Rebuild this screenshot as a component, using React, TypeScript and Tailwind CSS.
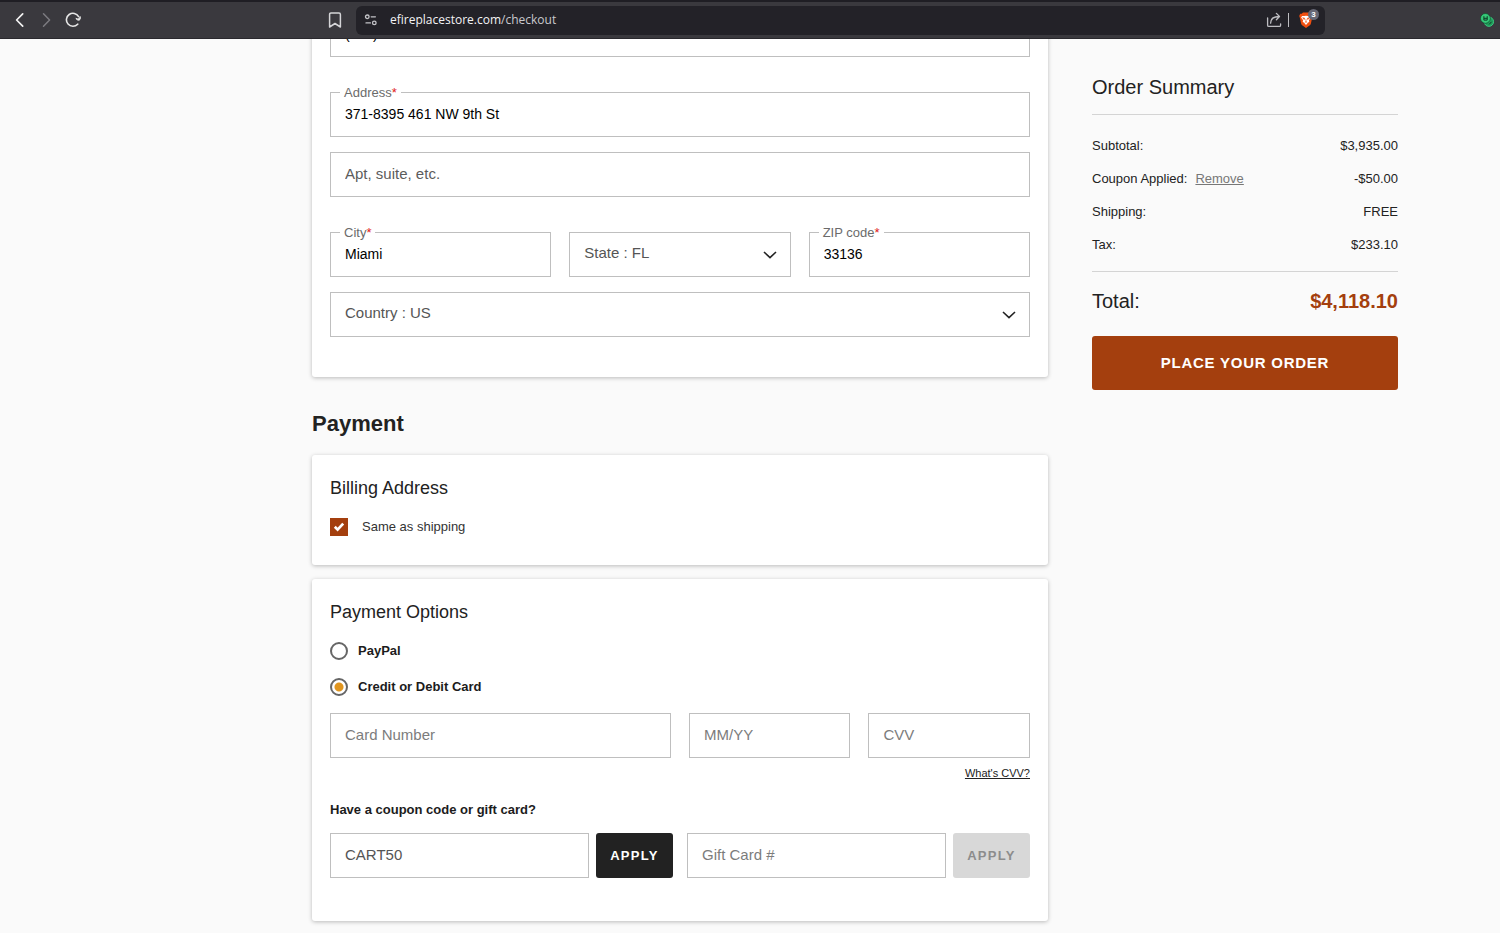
import { useId } from "react";
import type { ReactNode } from "react";

const box =
  "h-[45px] w-full rounded-none border border-[#bfbfbf] bg-white px-3.5 pb-0.5 outline-none placeholder:opacity-100";

function FloatingField({ label, value }: { label: string; value: string }) {
  const id = useId();
  return (
    <div className="relative min-w-0">
      <label
        htmlFor={id}
        className="absolute -top-[7px] left-2.5 bg-white px-1 text-[13px] leading-4 text-[#6b6b6b]"
      >
        {label}
        <span className="text-[#e02020]">*</span>
      </label>
      <input id={id} defaultValue={value} className={`${box} text-sm text-black`} />
    </div>
  );
}

function PlainField({
  label,
  value,
  dark = false,
}: {
  label: string;
  value?: string;
  dark?: boolean;
}) {
  return (
    <input
      aria-label={label}
      placeholder={label}
      defaultValue={value}
      className={`${box} min-w-0 text-[15px] text-[#555] ${dark ? "placeholder:text-[#5c5c5c]" : "placeholder:text-[#7c7c7c]"}`}
    />
  );
}

function SelectField({ label, value }: { label: string; value: string }) {
  return (
    <div className="relative min-w-0">
      <select
        aria-label={label}
        defaultValue={value}
        className={`${box} appearance-none text-[15px] text-[#555]`}
      >
        <option value={value}>
          {label} : {value}
        </option>
      </select>
      <svg
        viewBox="0 0 14 8"
        className="pointer-events-none absolute top-[19px] right-3.5 h-2 w-3.5"
        fill="none"
        stroke="#222"
        strokeWidth="1.6"
      >
        <path d="M1 1l6 5.6L13 1" />
      </svg>
    </div>
  );
}

function RadioOption({ label, checked }: { label: string; checked?: boolean }) {
  return (
    <label className="flex h-9 items-center gap-2.5 text-[13px] font-bold text-[#1c1c1c]">
      <input
        type="radio"
        name="method"
        defaultChecked={checked}
        className="size-[18px] appearance-none rounded-full border-2 border-[#666] bg-white checked:bg-[radial-gradient(circle,#e0951f_0_4px,#fff_5px)]"
      />
      {label}
    </label>
  );
}

function Card({ children, className }: { children: ReactNode; className: string }) {
  return (
    <section
      className={`rounded-[3px] bg-white px-[18px] shadow-[0_1px_4px_rgba(0,0,0,0.26)] ${className}`}
    >
      {children}
    </section>
  );
}

function SummaryRow({ label, value, action }: { label: string; value: string; action?: string }) {
  return (
    <div className="flex h-[33px] items-center justify-between">
      <dt className="flex gap-2">
        {label}
        {action && <button className="text-[#777] underline">{action}</button>}
      </dt>
      <dd>{value}</dd>
    </div>
  );
}

function Toolbar() {
  return (
    <header className="relative z-10 flex h-[39px] shrink-0 items-center border-t-2 border-b border-t-[#1f1e24] border-b-[#2a292e] bg-[#3a393e]">
      <nav className="flex w-[356px] shrink-0 items-center pl-3">
        <button aria-label="Back">
          <svg viewBox="0 0 16 16" className="size-4" fill="none" stroke="#f2f2f2" strokeWidth="1.7" strokeLinecap="round" strokeLinejoin="round">
            <path d="M10.7 1.8L4.6 8l6.1 6.2" />
          </svg>
        </button>
        <button aria-label="Forward" className="ml-2.5">
          <svg viewBox="0 0 16 16" className="size-4" fill="none" stroke="#7c7b80" strokeWidth="1.5" strokeLinecap="round" strokeLinejoin="round">
            <path d="M5.5 1.8l6.1 6.2-6.1 6.2" />
          </svg>
        </button>
        <button aria-label="Reload" className="ml-[11px]">
          <svg viewBox="0 0 16 16" className="size-4" fill="none" stroke="#e6e6e6" strokeWidth="1.6" strokeLinecap="round">
            <path d="M12.7 12.2A6.5 6.5 0 1 1 13.6 4.6" />
            <path d="M11.2 6.6q3.6 1.3 4-2v2.6q-.6 1.6-2.6.8z" fill="#e6e6e6" strokeWidth="1" strokeLinejoin="round" />
          </svg>
        </button>
        <button aria-label="Bookmark" className="mr-[13px] ml-auto">
          <svg viewBox="0 0 16 16" className="size-4" fill="none" stroke="#d5d5d8" strokeWidth="1.5" strokeLinejoin="round">
            <path d="M2.6 2.4q0-1.4 1.4-1.4h8q1.4 0 1.4 1.4V15L8 11.5 2.6 15z" />
          </svg>
        </button>
      </nav>
      <div className="flex h-[29px] min-w-0 flex-1 items-center rounded-md bg-[#232228] px-2">
        <svg viewBox="0 0 14 14" className="size-3.5 shrink-0" fill="none" stroke="#c4c4c8" strokeWidth="1.3" strokeLinecap="round">
          <circle cx="3.3" cy="3.8" r="1.8" />
          <path d="M7.2 3.8h4.2M2 9.9h4.4" />
          <circle cx="10.3" cy="9.9" r="1.8" />
        </svg>
        <div className="ml-3 flex-1 font-['Open_Sans',sans-serif] text-xs text-[#f3f3f5]">
          efireplacestore.com<span className="text-[#c9c9cd]">/checkout</span>
        </div>
        <button aria-label="Share">
          <svg viewBox="0 0 16 16" className="size-4" fill="none" stroke="#bdbdc1" strokeWidth="1.3" strokeLinecap="round" strokeLinejoin="round">
            <path d="M1.6 6v7.2q0 1.2 1.2 1.2h10.6q1.2 0 1.2-1.2v-1.4" />
            <path d="M4.6 11.2c0-4.3 2.7-6.7 8.6-6.7M10.4 1.4l3.1 3.1-3.1 3.2" />
          </svg>
        </button>
        <span className="mx-1.5 h-3.5 w-px bg-[#bdbdc1]" />
        <button aria-label="Brave Shields" className="relative ml-1">
          <svg viewBox="0 0 14 16" className="h-4 w-3.5">
            <path d="M4 .6h6l1.3 1.2 1.5-.1 1 2.2-.5 1.3-1.4 6.2q-.3 1.3-1.4 2.1L7 15.9l-3.5-2.4q-1.1-.8-1.4-2.1L.7 5.2.2 3.9l1-2.2 1.5.1z" fill="#f04e0f" />
            <path d="M3.1 3.9l2 .2L7 3.7l1.9.4 2-.2 1 1.7-2 2.7.4 1.5-1.6 1.1L7 12.9l-1.7-2-1.6-1.1.4-1.5-2-2.7z" fill="#fff" />
            <path d="M3.7 5.7l2 .5-.5 1.4zM10.3 5.7l-2 .5.5 1.4zM7 7v2.3M5.8 10.2L7 9.6l1.2.6" fill="#f04e0f" stroke="#f04e0f" strokeWidth=".6" />
          </svg>
          <span className="absolute -top-[3px] left-[9px] flex size-[11px] items-center justify-center rounded-full bg-[#676875] text-[8px] leading-none font-bold text-white">
            3
          </span>
        </button>
        <span className="w-1" />
      </div>
      <div className="flex w-[175px] shrink-0 justify-end pr-1.5">
        <button aria-label="Extension">
          <svg viewBox="0 0 14 14" className="size-3.5">
            <circle cx="8.9" cy="8.7" r="4.7" fill="#1f9d5a" stroke="#3fd98a" strokeWidth=".8" />
            <circle cx="5.4" cy="5.4" r="4.9" fill="#35c978" stroke="#0f3d27" strokeWidth=".6" />
            <path d="M3.9 3.2v3.9h3.3V3.2M3.9 5.3h3.3M9.2 11.4l2.3-2.6" fill="none" stroke="#0d3a25" strokeWidth="1" />
          </svg>
        </button>
      </div>
    </header>
  );
}

export default function App() {
  return (
    <div className="flex h-screen flex-col overflow-hidden bg-[#fafafa] font-['Liberation_Sans',Arial,sans-serif] text-[#222]">
      <Toolbar />
      <main className="flex min-h-0 flex-1 items-start gap-11 overflow-hidden pr-[102px] pl-[312px]">
        <div className="-mt-[62px] min-w-0 flex-1">
          <Card className="pt-[35px] pb-10">
            <FloatingField label="Phone" value="(305)" />
            <div className="mt-[35px]">
              <FloatingField label="Address" value="371-8395 461 NW 9th St" />
            </div>
            <div className="mt-[15px]">
              <PlainField label="Apt, suite, etc." dark />
            </div>
            <div className="mt-[35px] grid grid-cols-3 gap-[18px]">
              <FloatingField label="City" value="Miami" />
              <SelectField label="State" value="FL" />
              <FloatingField label="ZIP code" value="33136" />
            </div>
            <div className="mt-[15px]">
              <SelectField label="Country" value="US" />
            </div>
          </Card>

          <h2 className="mt-8 text-[22px] leading-[30px] font-bold">Payment</h2>

          <Card className="mt-4 pt-5 pb-5">
            <h3 className="text-lg leading-[26px]">Billing Address</h3>
            <label className="mt-2 flex h-9 items-center gap-3.5 text-[13px] text-[#333]">
              <span className="relative flex size-[18px]">
                <input type="checkbox" defaultChecked className="size-[18px] appearance-none bg-[#a43f0e]" />
                <svg viewBox="0 0 18 18" className="pointer-events-none absolute inset-0 size-[18px]" fill="none" stroke="#fff" strokeWidth="2.7">
                  <path d="M4.8 8.8l2.8 2.8 5.6-6" />
                </svg>
              </span>
              Same as shipping
            </label>
          </Card>

          <Card className="mt-3.5 pt-5 pb-[43px]">
            <h3 className="text-lg leading-[26px]">Payment Options</h3>
            <div className="mt-2">
              <RadioOption label="PayPal" />
              <RadioOption label="Credit or Debit Card" checked />
            </div>
            <div className="mt-2 grid grid-cols-[19fr_9fr_9fr] gap-[18px]">
              <PlainField label="Card Number" />
              <PlainField label="MM/YY" />
              <PlainField label="CVV" />
            </div>
            <div className="mt-1.5 text-right text-[11px] leading-[18px]">
              <a href="#cvv" className="underline">
                What's CVV?
              </a>
            </div>
            <p className="mt-[18px] text-[13px] leading-[20px] font-bold text-[#1c1c1c]">
              Have a coupon code or gift card?
            </p>
            <div className="mt-[13px] grid grid-cols-2 gap-3.5">
              <div className="flex gap-[7px]">
                <PlainField label="Coupon Code" value="CART50" />
                <button className="w-[77px] shrink-0 rounded-[3px] bg-[#222] text-[13px] font-bold tracking-widest text-white">
                  APPLY
                </button>
              </div>
              <div className="flex gap-[7px]">
                <PlainField label="Gift Card #" />
                <button disabled className="w-[77px] shrink-0 rounded-[3px] bg-[#d8d8d8] text-[13px] font-bold tracking-widest text-[#8c8c8c]">
                  APPLY
                </button>
              </div>
            </div>
          </Card>
        </div>

        <aside className="w-[306px] shrink-0 pt-[35px]">
          <h2 className="border-b border-[#d4d4d4] pb-3.5 text-xl leading-[26px]">Order Summary</h2>
          <dl className="border-b border-[#d4d4d4] pt-3.5 pb-2.5 text-[13px]">
            <SummaryRow label="Subtotal:" value="$3,935.00" />
            <SummaryRow label="Coupon Applied:" value="-$50.00" action="Remove" />
            <SummaryRow label="Shipping:" value="FREE" />
            <SummaryRow label="Tax:" value="$233.10" />
          </dl>
          <div className="mt-3.5 flex justify-between text-xl leading-[30px]">
            <span>Total:</span>
            <strong className="text-[#a43f0e]">$4,118.10</strong>
          </div>
          <button className="mt-5 h-[54px] w-full rounded-[3px] bg-[#a43f0e] text-[15px] font-bold tracking-wider text-white">
            PLACE YOUR ORDER
          </button>
        </aside>
      </main>
    </div>
  );
}
